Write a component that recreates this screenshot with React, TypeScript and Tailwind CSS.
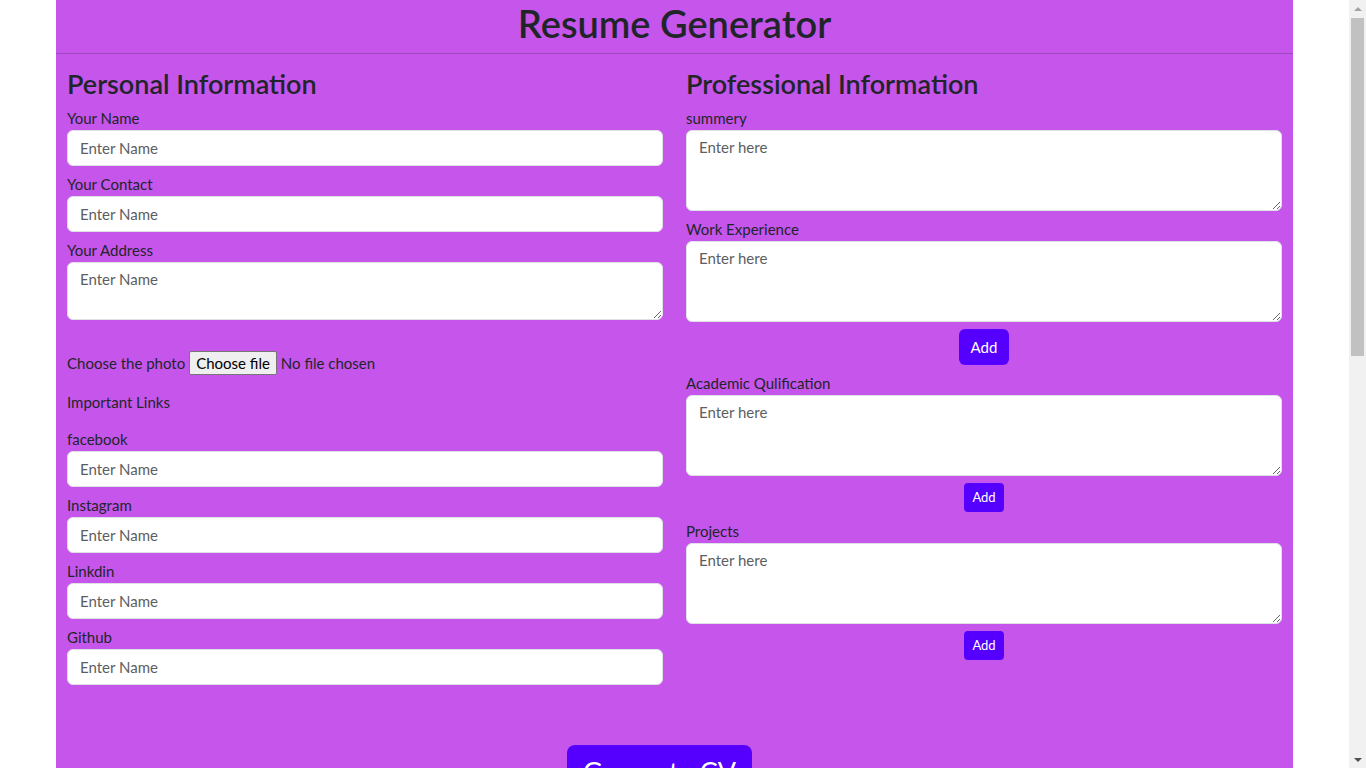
import React from "react";

const font = { fontFamily: "Lato, 'Liberation Sans', sans-serif" };

function Field({ label, placeholder }: { label: string; placeholder: string }) {
  return (
    <div className="flex flex-col">
      <label className="h-6 text-[15px] leading-6 text-[#212529]">{label}</label>
      <input
        type="text"
        placeholder={placeholder}
        className="h-9 w-full rounded-md border border-[#dee2e6] bg-white px-3 text-[15px] text-[#212529] placeholder:text-[#5b5e62] outline-none"
      />
    </div>
  );
}

function Area({ label, placeholder, tall }: { label: string; placeholder: string; tall?: boolean }) {
  return (
    <div className="flex flex-col">
      <label className="h-6 text-[15px] leading-6 text-[#212529]">{label}</label>
      <textarea
        placeholder={placeholder}
        className={
          "w-full rounded-md border border-[#dee2e6] bg-white px-3 py-[4px] text-[15px] leading-6 text-[#212529] placeholder:text-[#5b5e62] outline-none " +
          (tall ? "h-[81px]" : "h-[58px]")
        }
      />
    </div>
  );
}

function FakeScrollbar() {
  return (
    <div className="fixed right-0 top-0 flex h-screen w-[17px] flex-col items-center bg-[#f1f1f1]">
      <div className="flex h-[17px] w-full items-center justify-center">
        <div className="h-0 w-0 border-x-[4px] border-b-[4px] border-x-transparent border-b-[#a3a3a3]" />
      </div>
      <div className="mt-px h-[338px] w-[13px] bg-[#c1c1c1]" />
      <div className="flex-1" />
      <div className="flex h-[17px] w-full items-center justify-center">
        <div className="h-0 w-0 border-x-[4px] border-t-[4px] border-x-transparent border-t-[#505050]" />
      </div>
    </div>
  );
}

export default function App() {
  return (
    <div className="min-h-screen bg-white pr-[17px]" style={font}>
      <div className="mx-auto min-h-[1668px] w-[1237px] bg-[#c655ec]">
        {/* Header */}
        <h1 className="h-[53px] text-center text-[38px] font-semibold leading-[46px] text-[#212529]">
          Resume Generator
        </h1>
        <hr className="border-t border-[#212529]/25" />

        <div className="grid grid-cols-2 gap-x-[23px] px-[11px] pt-[13px]">
          {/* Personal */}
          <div className="flex flex-col">
            <h3 className="mb-[5px] text-[27px] font-semibold leading-[34px] text-[#212529]">
              Personal Information
            </h3>
            <div className="flex flex-col gap-[6px]">
              <Field label="Your Name" placeholder="Enter Name" />
              <Field label="Your Contact" placeholder="Enter Name" />
              <Area label="Your Address" placeholder="Enter Name" />
            </div>

            <div className="mt-[31px] flex h-6 items-center text-[15px] text-[#212529]">
              <span className="mr-[4px]">Choose the photo</span>
              <button className="mr-[4px] h-6 rounded-[2px] border border-[#767676] bg-[#efefef] px-[6px] text-[15px] text-black">
                Choose file
              </button>
              <span>No file chosen</span>
            </div>

            <p className="mt-[15px] h-6 text-[15px] leading-6 text-[#212529]">Important Links</p>

            <div className="mt-[13px] flex flex-col gap-[6px]">
              <Field label="facebook" placeholder="Enter Name" />
              <Field label="Instagram" placeholder="Enter Name" />
              <Field label="Linkdin" placeholder="Enter Name" />
              <Field label="Github" placeholder="Enter Name" />
            </div>
          </div>

          {/* Professional */}
          <div className="flex flex-col">
            <h3 className="mb-[5px] text-[27px] font-semibold leading-[34px] text-[#212529]">
              Professional Information
            </h3>
            <div className="flex flex-col">
              <Area label="summery" placeholder="Enter here" tall />
              <div className="mt-[6px]">
                <Area label="Work Experience" placeholder="Enter here" tall />
              </div>
              <div className="mt-[7px] flex justify-center">
                <button className="h-9 rounded-md bg-[#5500ff] px-3 text-[15px] text-white">Add</button>
              </div>
              <div className="mt-[6px]">
                <Area label="Academic Qulification" placeholder="Enter here" tall />
              </div>
              <div className="mt-[7px] flex justify-center">
                <button className="h-[29px] w-10 rounded-[4px] bg-[#5500ff] text-[13px] text-white">Add</button>
              </div>
              <div className="mt-[7px]">
                <Area label="Projects" placeholder="Enter here" tall />
              </div>
              <div className="mt-[7px] flex justify-center">
                <button className="h-[29px] w-10 rounded-[4px] bg-[#5500ff] text-[13px] text-white">Add</button>
              </div>
            </div>
          </div>
        </div>

        <div className="mt-[60px] flex justify-center pr-[30px]">
          <button className="h-[54px] w-[185px] rounded-lg bg-[#5500ff] text-[27px] leading-[54px] text-white">
            Generate CV
          </button>
        </div>
      </div>
      <FakeScrollbar />
    </div>
  );
}
